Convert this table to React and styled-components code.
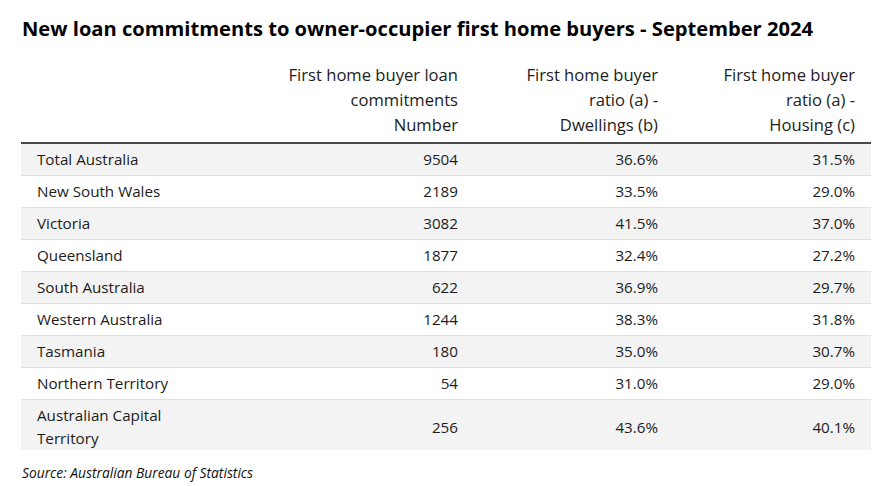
import React from "react";
import styled, { createGlobalStyle } from "styled-components";

const Global = createGlobalStyle`
  html, body { margin: 0; padding: 0; background: #fff; }
  body { font-family: "Open Sans", "Liberation Sans", sans-serif; color: #1c1c1c; }
`;

const Page = styled.div`
  width: 875px;
  height: 486px;
  box-sizing: border-box;
  padding: 14px 4px 0 21px;
  display: flex;
  flex-direction: column;
`;

const Title = styled.h1`
  margin: 0 0 0 1px;
  font-size: 20.15px;
  line-height: 28px;
  font-weight: 700;
  color: #000;
`;

const Table = styled.div`
  margin-top: 20px;
  width: 850px;
  display: flex;
  flex-direction: column;
`;

const cols = "192px 261px 200px 197px";

const HeadRow = styled.div`
  display: grid;
  grid-template-columns: ${cols};
  padding-bottom: 5px;
  border-bottom: 2px solid #4a4a4a;
`;

const HeadCell = styled.div`
  padding: 0 16px;
  text-align: right;
  font-size: 16.6px;
  line-height: 25px;
  color: #1c1c1c;
`;

const Row = styled.div`
  display: grid;
  grid-template-columns: ${cols};
  align-items: center;
  min-height: 31px;
  padding: ${(p) => (p.$tall ? "4px 0 0" : "0")};
  background: ${(p) => (p.$shaded ? "#f3f3f3" : "#fff")};
  border-bottom: ${(p) => (p.$last ? "none" : "1px solid #dedede")};
`;

const Cell = styled.div`
  padding: 0 16px;
  font-size: 15.2px;
  line-height: 23px;
  color: #1c1c1c;
  text-align: ${(p) => (p.$label ? "left" : "right")};
`;

const Source = styled.div`
  margin: 14px 0 0 1px;
  font-size: 13.8px;
  line-height: 18px;
  font-style: italic;
  color: #111;
`;

const rows = [
  ["Total Australia", "9504", "36.6%", "31.5%"],
  ["New South Wales", "2189", "33.5%", "29.0%"],
  ["Victoria", "3082", "41.5%", "37.0%"],
  ["Queensland", "1877", "32.4%", "27.2%"],
  ["South Australia", "622", "36.9%", "29.7%"],
  ["Western Australia", "1244", "38.3%", "31.8%"],
  ["Tasmania", "180", "35.0%", "30.7%"],
  ["Northern Territory", "54", "31.0%", "29.0%"],
  ["Australian Capital Territory", "256", "43.6%", "40.1%"],
];

export default function App() {
  return (
    <>
      <Global />
      <Page>
        <Title>New loan commitments to owner-occupier first home buyers - September 2024</Title>
        <Table>
          <HeadRow>
            <HeadCell />
            <HeadCell>
              First home buyer loan
              <br />
              commitments
              <br />
              Number
            </HeadCell>
            <HeadCell>
              First home buyer
              <br />
              ratio (a) -
              <br />
              Dwellings (b)
            </HeadCell>
            <HeadCell>
              First home buyer
              <br />
              ratio (a) -
              <br />
              Housing (c)
            </HeadCell>
          </HeadRow>
          {rows.map((r, i) => (
            <Row
              key={r[0]}
              $shaded={i % 2 === 0}
              $last={i === rows.length - 1}
              $tall={i === rows.length - 1}
            >
              <Cell $label>{r[0]}</Cell>
              <Cell>{r[1]}</Cell>
              <Cell>{r[2]}</Cell>
              <Cell>{r[3]}</Cell>
            </Row>
          ))}
        </Table>
        <Source>Source: Australian Bureau of Statistics</Source>
      </Page>
    </>
  );
}
